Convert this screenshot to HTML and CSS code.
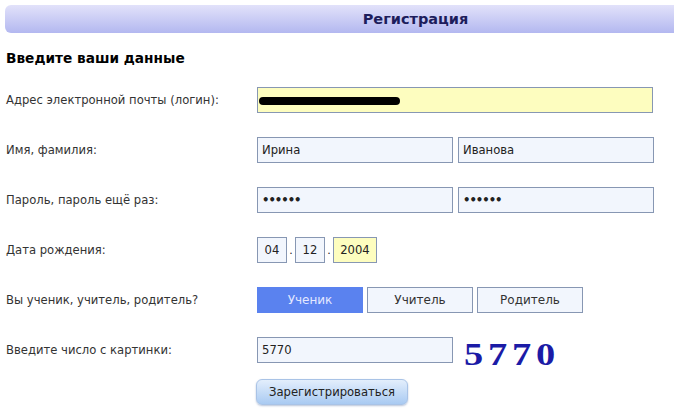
FILE: index.html
```html
<!DOCTYPE html>
<html lang="ru">
<head>
    <meta charset="UTF-8">
    <title>Регистрация</title>
    <link rel="stylesheet" href="styles.css">
</head>
<body>
    <div class="header">Регистрация</div>
    <h2 class="subtitle">Введите ваши данные</h2>

    <div class="form">
        <div class="row">
            <label>Адрес электронной почты (логин):</label>
            <div class="field wide yellow"><span class="redact"></span></div>
        </div>
        <div class="row">
            <label>Имя, фамилия:</label>
            <div class="pair">
                <input class="field" type="text" value="Ирина">
                <input class="field" type="text" value="Иванова">
            </div>
        </div>
        <div class="row">
            <label>Пароль, пароль ещё раз:</label>
            <div class="pair">
                <input class="field pass" type="text" value="••••••">
                <input class="field pass" type="text" value="••••••">
            </div>
        </div>
        <div class="row">
            <label>Дата рождения:</label>
            <div class="date">
                <input class="field day" type="text" value="04">
                <span class="dot">.</span>
                <input class="field day" type="text" value="12">
                <span class="dot">.</span>
                <input class="field year yellow" type="text" value="2004">
            </div>
        </div>
        <div class="row">
            <label>Вы ученик, учитель, родитель?</label>
            <div class="roles">
                <button class="role active">Ученик</button>
                <button class="role">Учитель</button>
                <button class="role">Родитель</button>
            </div>
        </div>
        <div class="row">
            <label>Введите число с картинки:</label>
            <div class="captcha-line">
                <input class="field" type="text" value="5770">
                <span class="captcha">5770</span>
            </div>
        </div>
        <div class="row last">
            <span></span>
            <div><button class="submit">Зарегистрироваться</button></div>
        </div>
    </div>
</body>
</html>
```

FILE: styles.css
```css
body {
    margin: 0;
    background: #fff;
    font-family: "DejaVu Sans", Verdana, sans-serif;
    color: #222;
}
.header {
    margin: 5px 0 0 5px;
    height: 28px;
    line-height: 28px;
    border-radius: 6px 0 0 6px;
    background: linear-gradient(#e2e2fa, #b3b8f0);
    color: #1d1d5c;
    font-size: 14.5px;
    font-weight: bold;
    text-align: center;
    padding-left: 152px;
}
.subtitle {
    margin: 17px 0 0 6px;
    font-size: 13.7px;
    font-weight: bold;
    color: #000;
}
.form {
    margin-top: 21px;
    padding-left: 6px;
}
.row {
    display: grid;
    grid-template-columns: 251px 1fr;
    grid-template-rows: 26px;
    align-items: center;
    height: 26px;
    margin-bottom: 24px;
}
.row.last {
    margin-top: -8px;
}
label {
    font-size: 11.6px;
    color: #333;
}
.field {
    box-sizing: border-box;
    height: 26px;
    border: 1px solid #8797b3;
    background: #f2f6fd;
    font-family: "DejaVu Sans", Verdana, sans-serif;
    font-size: 11.6px;
    color: #222;
    padding: 0 4px;
    margin: 0;
    width: 196px;
}
.field.wide {
    width: 396px;
    display: flex;
    align-items: center;
    padding-left: 1px;
}
.yellow {
    background: #fdfdbf;
}
.redact {
    display: inline-block;
    width: 141px;
    height: 8px;
    margin-top: 2px;
    border-radius: 4px;
    background: #000;
}
.pair {
    display: flex;
    gap: 5px;
}
.pass {
    font-weight: bold;
    letter-spacing: -1px;
}
.date {
    display: flex;
    align-items: center;
}
.field.day {
    width: 30px;
    text-align: center;
    padding: 0;
}
.field.year {
    width: 44px;
    text-align: center;
    padding: 0;
}
.dot {
    width: 8px;
    text-align: center;
    font-size: 11px;
}
.roles {
    display: flex;
    gap: 4px;
}
.role {
    box-sizing: border-box;
    width: 106px;
    height: 26px;
    border: 1px solid #8797b3;
    background: #f2f6fd;
    font-family: "DejaVu Sans", Verdana, sans-serif;
    font-size: 12px;
    color: #333;
    cursor: pointer;
}
.role.active {
    background: #5a82ef;
    border-color: #5a82ef;
    color: #e4e8ff;
}
.captcha-line {
    display: flex;
    align-items: center;
    gap: 11px;
    height: 26px;
}
.captcha {
    display: inline-block;
    font-family: "Liberation Serif", "Times New Roman", serif;
    font-weight: bold;
    font-size: 32px;
    line-height: 26px;
    letter-spacing: 4px;
    color: #1b1ba6;
    margin-top: 7px;
    transform: scaleX(1.2);
    transform-origin: left center;
}
.submit {
    margin-left: -1px;
    width: 152px;
    height: 26px;
    border: 1px solid #a9c3e6;
    border-radius: 6px;
    background: linear-gradient(#e3eefc, #a9caf2);
    box-shadow: 0 1px 2px rgba(80, 110, 160, 0.4);
    font-family: "DejaVu Sans", Verdana, sans-serif;
    font-size: 11.6px;
    color: #222;
    cursor: pointer;
}
```
